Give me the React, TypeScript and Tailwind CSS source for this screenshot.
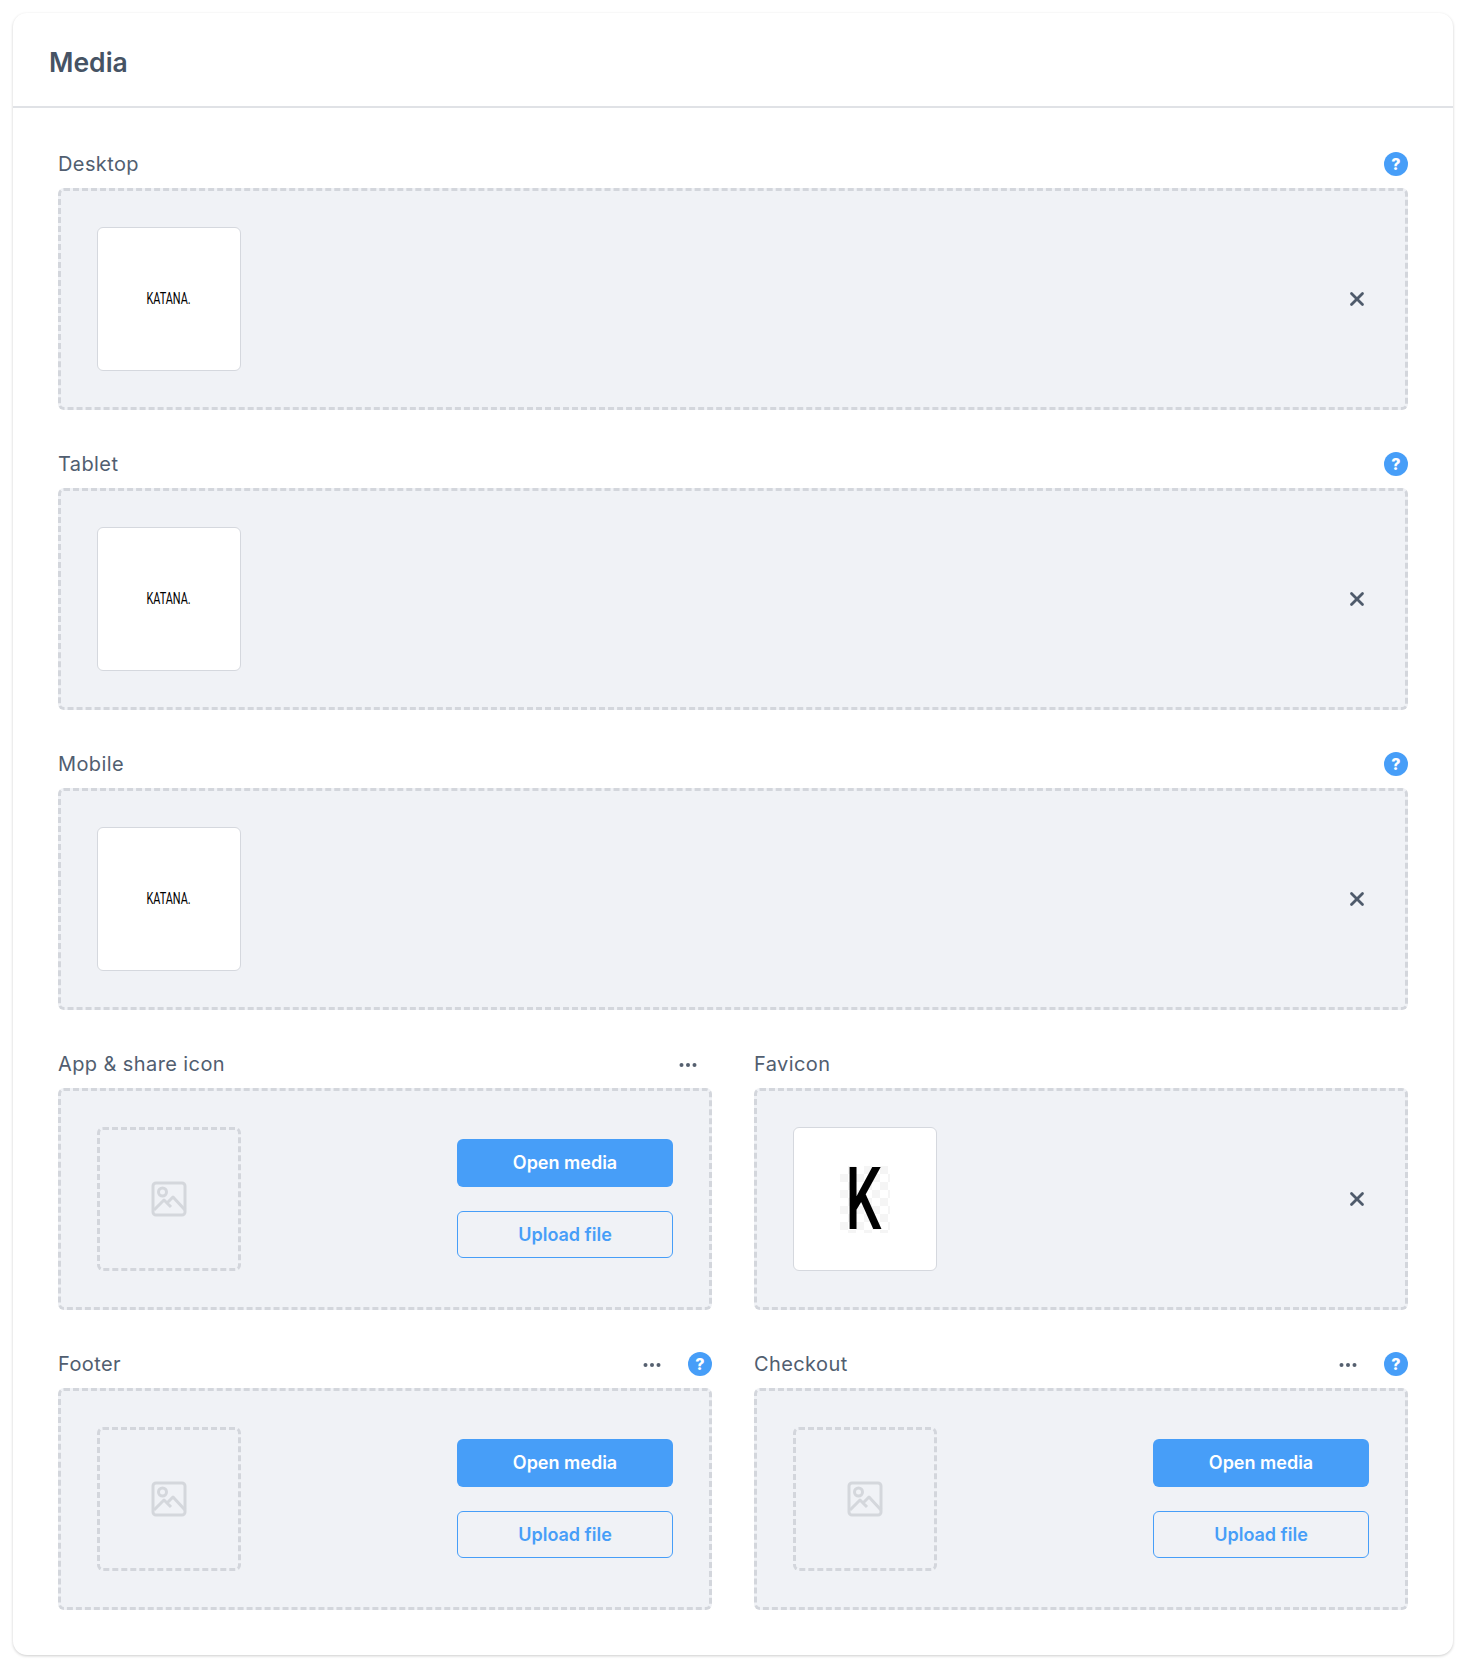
import { X } from 'lucide-react';

function Help() {
  return (
    <span className="flex h-6 w-6 items-center justify-center rounded-full bg-[#479ef8] text-[16px] leading-none font-extrabold text-white">
      ?
    </span>
  );
}

function Dots() {
  return (
    <span className="mt-[2px] mr-3 flex w-6 justify-center">
      <svg width="20" height="6" viewBox="0 0 20 6" fill="#55606f">
        <circle cx="3.5" cy="3" r="2" />
        <circle cx="10" cy="3" r="2" />
        <circle cx="16.5" cy="3" r="2" />
      </svg>
    </span>
  );
}

function ImageIcon() {
  return (
    <svg width="36" height="36" viewBox="0 0 36 36" fill="none" stroke="#d4d7dc" strokeWidth="3" strokeLinejoin="round">
      <rect x="2" y="2" width="32" height="32" rx="3" />
      <circle cx="11.5" cy="11" r="4" />
      <path d="M3 29l10-10 7 7M16 22l6-6 12 13" />
    </svg>
  );
}

function Thumb({ children }: { children: React.ReactNode }) {
  return (
    <div className="flex h-[144px] w-[144px] shrink-0 items-center justify-center rounded-[6px] border border-[#d5d8de] bg-white">
      {children}
    </div>
  );
}

function KatanaLogo() {
  return (
    <span className="mt-[1px] inline-block origin-center scale-x-[0.66] font-['Roboto',sans-serif] text-[16.5px] leading-none font-normal whitespace-nowrap text-black">
      KATANA.
    </span>
  );
}

function FaviconLogo() {
  return (
    <div className="flex h-[67px] w-[50px] items-center justify-center bg-[repeating-conic-gradient(#f5f5f5_0_25%,#ffffff_0_50%)] bg-[length:16px_16px]">
      <span className="inline-block origin-center -translate-x-[2px] scale-x-[0.65] font-['Roboto',sans-serif] text-[87px] leading-none font-medium text-black">
        K
      </span>
    </div>
  );
}

function Field({
  label,
  dots,
  help,
  children,
}: {
  label: string;
  dots?: boolean;
  help?: boolean;
  children: React.ReactNode;
}) {
  return (
    <div className="min-w-0 flex-1">
      <div className="mb-3 flex h-6 items-center">
        <span className="flex-1 text-[20px] leading-6 tracking-[0.4px] text-[#515e70]">{label}</span>
        <div className="flex items-center gap-3">
          {dots && <Dots />}
          {help && <Help />}
        </div>
      </div>
      <div className="flex h-[222px] items-center justify-between rounded-[6px] border-[3px] border-dashed border-[#d3d6dc] bg-[#f0f2f6] pr-[36px] pl-[36px]">
        {children}
      </div>
    </div>
  );
}

function Filled({ logo }: { logo: React.ReactNode }) {
  return (
    <>
      <Thumb>{logo}</Thumb>
      <span className="flex w-6 justify-center text-[#4f5b6b]">
        <X size={22} strokeWidth={3} />
      </span>
    </>
  );
}

function Empty() {
  return (
    <>
      <div className="flex h-[144px] w-[144px] shrink-0 items-center justify-center rounded-[6px] border-[3px] border-dashed border-[#d3d6dc]">
        <ImageIcon />
      </div>
      <div className="mb-[2px] flex w-[216px] flex-col gap-6">
        <button className="h-[48px] rounded-[6px] bg-[#479ef8] text-[18px] font-semibold text-white">Open media</button>
        <button className="h-[47px] rounded-[6px] border border-[#479ef8] text-[18px] font-semibold text-[#479ef8]">
          Upload file
        </button>
      </div>
    </>
  );
}

export default function App() {
  return (
    <div className="bg-white pt-[13px] pr-[15px] pb-[15px] pl-[13px] font-['Inter',sans-serif]">
      <div className="rounded-[14px] bg-white shadow-[0_1px_3px_rgba(0,0,0,0.2)]">
        <div className="flex h-[95px] items-center border-b-2 border-[#e0e2e6] px-[36px] pt-[6px]">
          <h2 className="text-[26.5px] font-semibold text-[#465364]">Media</h2>
        </div>
        <div className="flex flex-col gap-[42px] px-[45px] pt-[44px] pb-[45px]">
          <Field label="Desktop" help>
            <Filled logo={<KatanaLogo />} />
          </Field>
          <Field label="Tablet" help>
            <Filled logo={<KatanaLogo />} />
          </Field>
          <Field label="Mobile" help>
            <Filled logo={<KatanaLogo />} />
          </Field>
          <div className="flex gap-[42px]">
            <Field label="App & share icon" dots>
              <Empty />
            </Field>
            <Field label="Favicon">
              <Filled logo={<FaviconLogo />} />
            </Field>
          </div>
          <div className="flex gap-[42px]">
            <Field label="Footer" dots help>
              <Empty />
            </Field>
            <Field label="Checkout" dots help>
              <Empty />
            </Field>
          </div>
        </div>
      </div>
    </div>
  );
}
